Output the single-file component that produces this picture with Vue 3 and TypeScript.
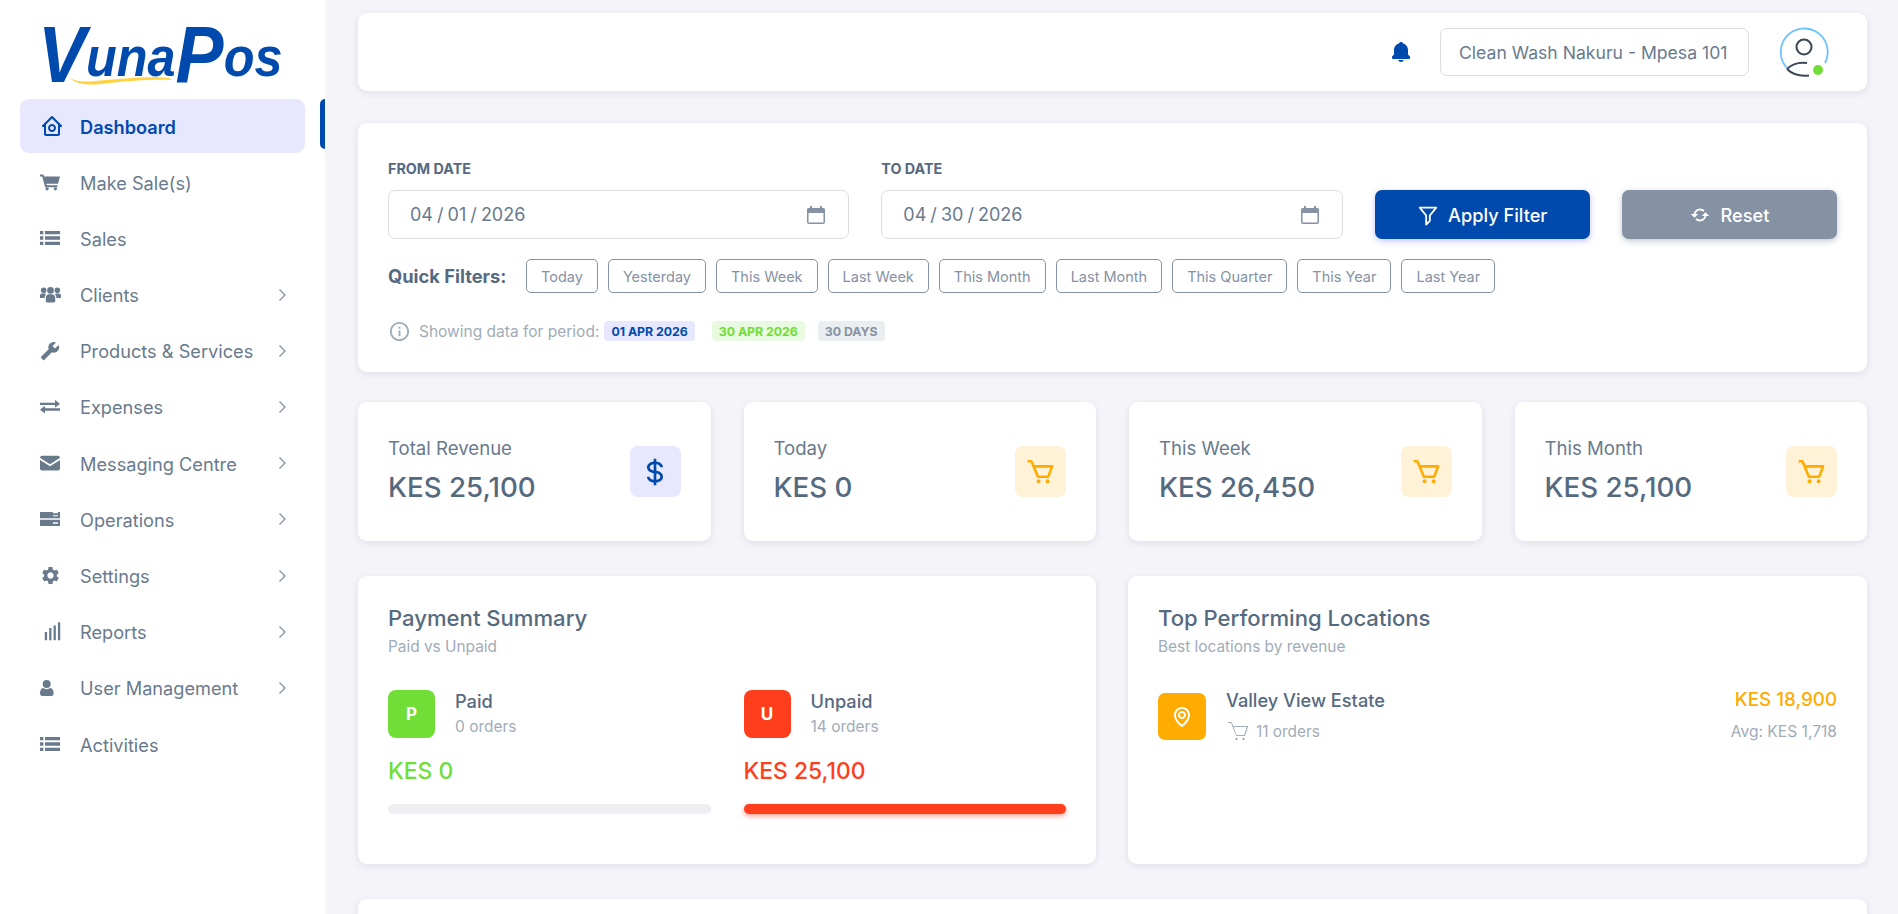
<script setup lang="ts">
import { ref } from 'vue'

interface NavItem {
  label: string
  size: number
  paths: string[]
  hasChildren?: boolean
  active?: boolean
}

const listIcon = ['M0 3.500h4v4H0zM6 3.500h18v4H6zM0 10h4v4H0zM6 10h18v4H6zM0 16.500h4v4H0zM6 16.500h18v4H6z']

const navItems: NavItem[] = [
  {
    label: 'Dashboard',
    size: 24,
    active: true,
    paths: [
      'M3 13h1v7c0 1.103.897 2 2 2h12c1.103 0 2-.897 2-2v-7h1a1 1 0 0 0 .707-1.707l-9-9a.999.999 0 0 0-1.414 0l-9 9A1 1 0 0 0 3 13zm9-8.586 6 6V15l.001 5H6v-9.586l6-6z',
      'M12 18c2.206 0 4-1.794 4-4s-1.794-4-4-4-4 1.794-4 4 1.794 4 4 4zm0-6c1.103 0 2 .897 2 2s-.897 2-2 2-2-.897-2-2 .897-2 2-2z',
    ],
  },
  {
    label: 'Make Sale(s)',
    size: 20,
    paths: ['M0 3h4.2l.7 2.4H24l-2.4 8.6H7.6l.5 2H21v2.4H6.2L2.6 5.4H0z', 'M6.5 20.2a2 2 0 1 0 4 0 2 2 0 0 0-4 0zM16.5 20.2a2 2 0 1 0 4 0 2 2 0 0 0-4 0z'],
  },
  { label: 'Sales', size: 20, paths: listIcon },
  {
    label: 'Clients',
    size: 21,
    hasChildren: true,
    paths: [
      'M12 3.500a3.800 3.800 0 1 1 0 7.600 3.800 3.800 0 0 1 0-7.600zM4.200 4a3.200 3.200 0 1 1 0 6.400 3.200 3.200 0 0 1 0-6.400zM19.800 4a3.200 3.200 0 1 1 0 6.400 3.200 3.200 0 0 1 0-6.400z',
      'M6.600 19.800v-4c0-2.800 2.200-4.200 3.600-4.200h3.600c1.400 0 3.600 1.400 3.600 4.200v4c0 .8-.8 1.200-1.600 1.200H8.200c-.8 0-1.600-.4-1.600-1.200z',
      'M0 15.400v-2.200c0-1.400 1-2.400 2.400-2.400h3.400c.3.6.7 1 1.200 1.300-1.100 1-1.800 2.400-1.800 4H1.400C.6 16.100 0 16 0 15.400zM24 15.400v-2.200c0-1.400-1-2.400-2.400-2.400h-3.400c-.3.6-.7 1-1.200 1.300 1.100 1 1.800 2.400 1.800 4h3.800c.8 0 1.400-.1 1.400-.7z',
    ],
  },
  {
    label: 'Products & Services',
    size: 20,
    hasChildren: true,
    paths: ['M1.3 19l9.1-9.1c-.9-2.3-.4-5 1.5-6.9 2-2 5-2.4 7.4-1.3L15 6l3 3 4.4-4.3c1.2 2.4.7 5.4-1.3 7.4-1.9 1.9-4.6 2.4-6.9 1.5l-9.1 9.1c-.4.4-1 .4-1.4 0l-2.3-2.3c-.5-.4-.5-1.1-.1-1.4z'],
  },
  {
    label: 'Expenses',
    size: 20,
    hasChildren: true,
    paths: ['M0 7h18V3.400L24 8.300l-6 4.300V9.600H0zM24 13.400H6v-3l-6 4.800 6 4.500v-3.200h18z'],
  },
  {
    label: 'Messaging Centre',
    size: 20,
    hasChildren: true,
    paths: ['M0 5.600C0 4.400.9 3.200 2.400 3.200h19.200C23.100 3.200 24 4.400 24 5.600L12 13.400zM0 8.400l12 7.600 12-7.600v10.200c0 1.400-1 2.400-2.400 2.400H2.400C1 21 0 20 0 18.600z'],
  },
  {
    label: 'Operations',
    size: 20,
    hasChildren: true,
    paths: ['M0 3.500h15.500v1.600h6V3.500H24v7.500H0zM15.500 7.600v1h6v-1zM0 13h24v3h-8.500v1.600h6V16H24v4.500H0z'],
  },
  {
    label: 'Settings',
    size: 21,
    hasChildren: true,
    paths: ['M19.14 12.94c.04-.3.06-.61.06-.94 0-.32-.02-.64-.07-.94l2.03-1.58a.49.49 0 0 0 .12-.61l-1.92-3.32a.488.488 0 0 0-.59-.22l-2.39.96c-.5-.38-1.03-.7-1.62-.94l-.36-2.54a.484.484 0 0 0-.48-.41h-3.84c-.24 0-.43.17-.47.41l-.36 2.54c-.59.24-1.13.57-1.62.94l-2.39-.96c-.22-.08-.47 0-.59.22L2.74 8.87c-.12.21-.08.47.12.61l2.03 1.58c-.05.3-.09.63-.09.94s.02.64.07.94l-2.03 1.58a.49.49 0 0 0-.12.61l1.92 3.32c.12.22.37.29.59.22l2.39-.96c.5.38 1.03.7 1.62.94l.36 2.54c.05.24.24.41.48.41h3.84c.24 0 .44-.17.47-.41l.36-2.54c.59-.24 1.13-.56 1.62-.94l2.39.96c.22.08.47 0 .59-.22l1.92-3.32c.12-.22.07-.47-.12-.61l-2.01-1.58zM12 15.600c-1.980 0-3.600-1.620-3.600-3.600s1.620-3.600 3.600-3.600 3.600 1.620 3.600 3.600-1.620 3.600-3.600 3.600z'],
  },
  {
    label: 'Reports',
    size: 21,
    hasChildren: true,
    paths: ['M5.500 12.500h2.600V22H5.500zM10.500 8h2.600v14h-2.600zM15.500 5h2.600v17h-2.600zM20.500 1.500h2.600V22h-2.600z'],
  },
  {
    label: 'User Management',
    size: 20,
    hasChildren: true,
    paths: ['M8 2.400a4.800 4.800 0 1 1 0 9.600 4.800 4.800 0 0 1 0-9.600zM0 18.400c0-4 2-6.400 4-6.400 1 .8 2.400 1.400 4 1.400s3-.6 4-1.400c2.200 0 4.400 2.400 4.400 6.400 0 2-1 3.200-2.800 3.200H2.800C1 21.600 0 20.400 0 18.400z'],
  },
  { label: 'Activities', size: 20, paths: listIcon },
]

const fromDate = ref('04 / 01 / 2026')
const toDate = ref('04 / 30 / 2026')
const quickFilters = ['Today', 'Yesterday', 'This Week', 'Last Week', 'This Month', 'Last Month', 'This Quarter', 'This Year', 'Last Year']

const cartPath = 'M21.822 7.431A1 1 0 0 0 21 7H7.333L6.179 4.23A1.994 1.994 0 0 0 4.333 3H2v2h2.333l4.744 11.385A1 1 0 0 0 10 17h8c.417 0 .79-.259.937-.648l3-8a1 1 0 0 0-.115-.921zM17.307 15h-6.640l-2.500-6h11.390l-2.250 6z'

const stats = [
  { label: 'Total Revenue', value: 'KES 25,100', kind: 'dollar' },
  { label: 'Today', value: 'KES 0', kind: 'cart' },
  { label: 'This Week', value: 'KES 26,450', kind: 'cart' },
  { label: 'This Month', value: 'KES 25,100', kind: 'cart' },
]

const payments = [
  { key: 'paid', letter: 'P', name: 'Paid', orders: '0 orders', amount: 'KES 0', percent: 0 },
  { key: 'unpaid', letter: 'U', name: 'Unpaid', orders: '14 orders', amount: 'KES 25,100', percent: 100 },
]
</script>

<template>
  <div class="layout">
    <aside class="sidebar">
      <div class="brand">
        <svg class="brand-logo" viewBox="0 0 245 68" role="img" aria-label="VunaPos">
          <text class="brand-text" x="0" y="57" transform="scale(0.9 1)"><tspan class="brand-cap" dy="6">V</tspan><tspan dy="-6">una</tspan><tspan class="brand-cap" dy="6">P</tspan><tspan dy="-6">os</tspan></text>
          <path d="M31 58c8 6 18 5 38 3s44-4 62-2l3 2c-20-1-44 1-63 3-20 3-33 2-40-6z" fill="#ffd23f" />
        </svg>
      </div>
      <span class="active-marker"></span>
      <nav class="menu">
        <a v-for="item in navItems" :key="item.label" class="menu-item" :class="{ active: item.active }">
          <span class="menu-icon">
            <svg :width="item.size" :height="item.size" viewBox="0 0 24 24" fill="currentColor">
              <path v-for="d in item.paths" :key="d" :d="d" fill-rule="evenodd" />
            </svg>
          </span>
          <span class="menu-label">{{ item.label }}</span>
          <svg v-if="item.hasChildren" class="chevron" width="9" height="14" viewBox="0 0 9 14" fill="none">
            <path d="M1.500 1.500 7 7l-5.500 5.500" stroke="currentColor" stroke-width="1.300" />
          </svg>
        </a>
      </nav>
    </aside>

    <main class="content">
      <header class="card topbar">
        <svg class="bell" width="24" height="24" viewBox="0 0 24 24" fill="currentColor">
          <path d="M12 22c1.311 0 2.407-.834 2.818-2H9.182C9.593 21.166 10.689 22 12 22zm7-7.414V10c0-3.217-2.185-5.927-5.145-6.742C13.562 2.520 12.846 2 12 2s-1.562.520-1.855 1.258C7.185 4.074 5 6.783 5 10v4.586l-1.707 1.707A.996.996 0 0 0 3 17v1a1 1 0 0 0 1 1h16a1 1 0 0 0 1-1v-1a.996.996 0 0 0-.293-.707L19 14.586z" />
        </svg>
        <div class="location-select">Clean Wash Nakuru - Mpesa 101</div>
        <div class="avatar">
          <svg width="50" height="50" viewBox="0 0 50 50" fill="none">
            <path d="M8 41A23.500 23.500 0 1 1 46 36" stroke="#6ec1ff" stroke-width="1.800" />
            <circle cx="25" cy="20" r="7.500" stroke="#3d4753" stroke-width="2" />
            <path d="M8 42C13 37 20 35 28 36M8 42C13 47 21 49.500 30 48.500" stroke="#3d4753" stroke-width="2" />
          </svg>
          <span class="online-dot"></span>
        </div>
      </header>

      <section class="card filter-card">
        <div class="filter-grid">
          <div class="field">
            <label>FROM DATE</label>
            <div class="date-input">
              <span>{{ fromDate }}</span>
              <svg width="20" height="20" viewBox="0 0 20 20"><path d="M4 1h2v2h8V1h2v2h1.500A1.500 1.500 0 0 1 19 4.500V17a2 2 0 0 1-2 2H3a2 2 0 0 1-2-2V4.500A1.500 1.500 0 0 1 2.500 3H4zM2.500 8v9a.5.5 0 0 0 .5.5h14a.5.5 0 0 0 .5-.5V8z" fill="#8592a3" fill-rule="evenodd" /></svg>
            </div>
          </div>
          <div class="field">
            <label>TO DATE</label>
            <div class="date-input">
              <span>{{ toDate }}</span>
              <svg width="20" height="20" viewBox="0 0 20 20"><path d="M4 1h2v2h8V1h2v2h1.500A1.500 1.500 0 0 1 19 4.500V17a2 2 0 0 1-2 2H3a2 2 0 0 1-2-2V4.500A1.500 1.500 0 0 1 2.500 3H4zM2.500 8v9a.5.5 0 0 0 .5.5h14a.5.5 0 0 0 .5-.5V8z" fill="#8592a3" fill-rule="evenodd" /></svg>
            </div>
          </div>
          <button class="btn btn-primary">
            <svg width="22" height="22" viewBox="0 0 24 24" fill="none"><path d="M3 4h18l-7 8.500v6L10 22.500V12.500z" stroke="currentColor" stroke-width="2" stroke-linejoin="round" /></svg>
            Apply Filter
          </button>
          <button class="btn btn-secondary">
            <svg width="22" height="22" viewBox="0 0 24 24" fill="currentColor"><path d="M10 11H7.101l.001-.009a4.956 4.956 0 0 1 .752-1.787 5.054 5.054 0 0 1 2.200-1.811c.302-.128.617-.226.938-.291a5.078 5.078 0 0 1 2.018 0 4.978 4.978 0 0 1 2.525 1.361l1.416-1.412a7.036 7.036 0 0 0-2.224-1.501 6.921 6.921 0 0 0-1.315-.408 7.079 7.079 0 0 0-2.819 0 6.940 6.940 0 0 0-1.316.409 7.040 7.040 0 0 0-3.080 2.534 6.978 6.978 0 0 0-1.054 2.505c-.028.135-.043.273-.063.410H2l4 4 4-4zm4 2h2.899l-.001.008a4.976 4.976 0 0 1-2.103 3.138 4.943 4.943 0 0 1-1.787.752 5.073 5.073 0 0 1-2.017 0 4.956 4.956 0 0 1-1.787-.752 5.072 5.072 0 0 1-.740-.610L7.050 16.950a7.032 7.032 0 0 0 2.225 1.500c.424.180.867.317 1.315.408a7.070 7.070 0 0 0 2.818 0 7.031 7.031 0 0 0 4.395-2.945 6.974 6.974 0 0 0 1.053-2.503c.027-.135.043-.273.063-.410H22l-4-4-4 4z" /></svg>
            Reset
          </button>
        </div>

        <div class="quick-row">
          <span class="quick-label">Quick Filters:</span>
          <button v-for="f in quickFilters" :key="f" class="chip">{{ f }}</button>
        </div>

        <div class="period-row">
          <svg width="23" height="23" viewBox="0 0 24 24" fill="currentColor"><path d="M12 2C6.486 2 2 6.486 2 12s4.486 10 10 10 10-4.486 10-10S17.514 2 12 2zm0 18c-4.411 0-8-3.589-8-8s3.589-8 8-8 8 3.589 8 8-3.589 8-8 8z" /><path d="M11 11h2v6h-2zm0-4h2v2h-2z" /></svg>
          <span class="period-text">Showing data for period:</span>
          <span class="badge badge-blue">01 APR 2026</span>
          <span class="badge badge-green">30 APR 2026</span>
          <span class="badge badge-gray">30 DAYS</span>
        </div>
      </section>

      <section class="stats-grid">
        <div v-for="s in stats" :key="s.label" class="card stat-card">
          <div>
            <div class="stat-label">{{ s.label }}</div>
            <div class="stat-value">{{ s.value }}</div>
          </div>
          <div class="stat-icon" :class="s.kind">
            <svg v-if="s.kind === 'dollar'" width="32" height="32" viewBox="0 0 24 24" fill="currentColor"><path d="M15.999 8.500h2c0-2.837-2.755-4.131-5-4.429V2h-2v2.071c-2.245.298-5 1.592-5 4.429 0 2.706 2.666 4.113 5 4.430v4.970c-1.448-.251-3-1.024-3-2.400h-2c0 2.589 2.425 4.119 5 4.436V22h2v-2.070c2.245-.298 5-1.593 5-4.430s-2.755-4.131-5-4.429V6.100c1.330.239 3 .941 3 2.400zm-8 0c0-1.459 1.670-2.161 3-2.400v4.799c-1.371-.253-3-1.002-3-2.399zm8 7c0 1.459-1.670 2.161-3 2.400v-4.800c1.330.239 3 .941 3 2.400z" /></svg>
            <svg v-else width="31" height="31" viewBox="0 0 24 24" fill="currentColor"><path :d="cartPath" /><circle cx="10.500" cy="19.500" r="1.500" /><circle cx="17.500" cy="19.500" r="1.500" /></svg>
          </div>
        </div>
      </section>

      <section class="summary-grid">
        <div class="card summary-card">
          <h3 class="card-title">Payment Summary</h3>
          <p class="card-sub">Paid vs Unpaid</p>
          <div class="payment-cols">
            <div v-for="p in payments" :key="p.key" class="payment" :class="p.key">
              <div class="payment-head">
                <span class="payment-letter">{{ p.letter }}</span>
                <div>
                  <div class="row-name">{{ p.name }}</div>
                  <div class="payment-orders">{{ p.orders }}</div>
                </div>
              </div>
              <div class="payment-amount">{{ p.amount }}</div>
              <div class="progress"><div class="progress-bar" :style="{ width: p.percent + '%' }"></div></div>
            </div>
          </div>
        </div>

        <div class="card summary-card">
          <h3 class="card-title">Top Performing Locations</h3>
          <p class="card-sub">Best locations by revenue</p>
          <div class="location-row">
            <span class="location-icon">
              <svg width="24" height="24" viewBox="0 0 24 24" fill="currentColor"><path d="M12 14c2.206 0 4-1.794 4-4s-1.794-4-4-4-4 1.794-4 4 1.794 4 4 4zm0-6c1.103 0 2 .897 2 2s-.897 2-2 2-2-.897-2-2 .897-2 2-2z" /><path d="M11.420 21.814a.998.998 0 0 0 1.160 0C12.884 21.599 20.029 16.440 20 10c0-4.411-3.589-8-8-8S4 5.589 4 9.995c-.029 6.445 7.116 11.604 7.420 11.819zM12 4c3.309 0 6 2.691 6 6.005.021 4.438-4.388 8.423-6 9.730-1.611-1.308-6.021-5.294-6-9.735 0-3.309 2.691-6 6-6z" /></svg>
            </span>
            <div class="location-info">
              <div class="row-name">Valley View Estate</div>
              <div class="location-orders">
                <svg width="24" height="24" viewBox="0 0 24 24" fill="currentColor"><path d="M21 7H7.333L6.179 4.230A1.994 1.994 0 0 0 4.333 3H2v1h2.333c.4 0 .8.300 1 .7l4.500 11.600c.1.400.4.700.7.700h8c.3 0 .5-.2.6-.5l3-8.800c.1-.4-.2-.7-.5-.7zM18.100 16h-7.700L7.700 8h13.100z" /><circle cx="10.500" cy="20" r="1.200" /><circle cx="17.500" cy="20" r="1.200" /></svg>
                <span>11 orders</span>
              </div>
            </div>
            <div class="location-total">
              <div class="location-amount">KES 18,900</div>
              <div class="location-avg">Avg: KES 1,718</div>
            </div>
          </div>
        </div>
      </section>

      <section class="card bottom-card"></section>
    </main>
  </div>
</template>

<style scoped>
.layout {
  display: flex;
  height: 914px;
  overflow: hidden;
  background: #f4f4f9;
  font-family: Inter, "Liberation Sans", sans-serif;
  color: #697a8d;
}

.sidebar {
  position: relative;
  flex: 0 0 325px;
  background: #fff;
}

.brand {
  height: 99px;
  padding: 19px 0 0 38px;
  box-sizing: border-box;
}

.brand-logo {
  display: block;
  width: 245px;
  height: 68px;
  overflow: visible;
}

.brand-text {
  font-family: "Liberation Sans", sans-serif;
  font-style: italic;
  font-weight: 700;
  font-size: 56px;
  fill: #004aad;
}

.brand-cap {
  font-size: 80px;
}

.active-marker {
  position: absolute;
  top: 99px;
  right: 0;
  width: 5px;
  height: 50px;
  background: #004aad;
  border-radius: 5px 0 0 5px;
}

.menu {
  padding: 0 20px;
}

.menu-item {
  display: flex;
  align-items: center;
  height: 54px;
  margin-bottom: 2.2px;
  padding: 0 18px 0 20px;
  border-radius: 9px;
  font-size: 18.2px;
  color: #697a8d;
}

.menu-item.active {
  background: #e7e7ff;
  color: #004aad;
  font-weight: 600;
}

.menu-icon {
  flex: 0 0 40px;
  display: flex;
  align-items: center;
}

.menu-label {
  flex: 1;
  padding-top: 1px;
}

.chevron {
  color: #8592a3;
}

.content {
  flex: 1;
  min-width: 0;
  padding: 13px 31px 0 33px;
}

.card {
  background: #fff;
  border-radius: 9px;
  box-shadow: 0 2px 7px rgba(67, 89, 113, 0.12);
}

.topbar {
  display: flex;
  align-items: center;
  justify-content: flex-end;
  height: 78px;
  padding: 0 38px 0 0;
}

.bell {
  color: #004aad;
  margin-right: 27px;
}

.location-select {
  width: 309px;
  height: 48px;
  box-sizing: border-box;
  padding: 0 18px;
  display: flex;
  align-items: center;
  border: 1px solid #d9dee3;
  border-radius: 7px;
  font-size: 17.6px;
  white-space: nowrap;
}

.avatar {
  position: relative;
  width: 50px;
  height: 50px;
  margin-left: 30px;
}

.online-dot {
  position: absolute;
  right: 6px;
  bottom: 2px;
  width: 10px;
  height: 10px;
  border-radius: 50%;
  background: #71dd37;
}

.filter-card {
  margin-top: 32px;
  height: 249px;
  padding: 36px 30px 0;
  box-sizing: border-box;
}

.filter-grid {
  display: grid;
  grid-template-columns: 461fr 461fr 215fr 215fr;
  column-gap: 32px;
  align-items: end;
}

.field label {
  display: block;
  margin-bottom: 12px;
  font-size: 14.3px;
  line-height: 19px;
  font-weight: 700;
  color: #566a7f;
}

.date-input {
  display: flex;
  align-items: center;
  justify-content: space-between;
  height: 49px;
  box-sizing: border-box;
  padding: 0 22px 0 21px;
  border: 1px solid #d9dee3;
  border-radius: 7px;
  font-size: 18px;
  word-spacing: -1px;
}

.btn {
  display: flex;
  align-items: center;
  justify-content: center;
  gap: 9px;
  height: 49px;
  border: none;
  border-radius: 7px;
  color: #fff;
  font-family: inherit;
  font-size: 18.2px;
  font-weight: 500;
}

.btn-primary {
  background: #004aad;
  box-shadow: 0 2px 6px rgba(105, 108, 255, 0.4);
}

.btn-secondary {
  background: #8592a3;
  box-shadow: 0 2px 6px rgba(133, 146, 163, 0.5);
}

.quick-row {
  display: flex;
  align-items: center;
  margin-top: 20px;
  gap: 10px;
}

.quick-label {
  width: 128px;
  font-size: 18.3px;
  font-weight: 700;
  white-space: nowrap;
  color: #566a7f;
}

.chip {
  height: 34px;
  padding: 0 14px;
  background: #fff;
  border: 1px solid #8592a3;
  border-radius: 5px;
  color: #8592a3;
  font-family: inherit;
  font-size: 14.5px;
  white-space: nowrap;
}

.period-row {
  display: flex;
  align-items: center;
  height: 20px;
  margin-top: 28px;
  color: #a1acb8;
}

.period-text {
  margin: 0 5px 0 8px;
  font-size: 15.5px;
}

.badge {
  height: 20px;
  display: flex;
  align-items: center;
  padding: 0 7px;
  margin-right: 17px;
  border-radius: 4px;
  font-size: 12.3px;
  font-weight: 700;
}

.badge-blue {
  background: #e7e7ff;
  color: #004aad;
}

.badge-green {
  background: #e8fadf;
  color: #71dd37;
  margin-right: 13px;
}

.badge-gray {
  background: #ebeef0;
  color: #8592a3;
}

.stats-grid {
  display: grid;
  grid-template-columns: repeat(4, 1fr);
  gap: 33px;
  margin-top: 30px;
}

.stat-card {
  display: flex;
  align-items: center;
  justify-content: space-between;
  height: 139px;
  padding: 0 30px;
  box-sizing: border-box;
}

.stat-label {
  margin-top: -3px;
  font-size: 18.6px;
  line-height: 24px;
}

.stat-value {
  margin-top: 9px;
  font-size: 27.7px;
  line-height: 36px;
  font-weight: 500;
  color: #566a7f;
}

.stat-icon {
  display: flex;
  align-items: center;
  justify-content: center;
  width: 51px;
  height: 51px;
  border-radius: 8px;
}

.stat-icon.dollar {
  background: #e7e7ff;
  color: #004aad;
}

.stat-icon.cart {
  background: #fff2d6;
  color: #ffab00;
}

.summary-grid {
  display: grid;
  grid-template-columns: 738px 1fr;
  gap: 32px;
  margin-top: 35px;
}

.summary-card {
  height: 288px;
  padding: 27px 30px 0;
  box-sizing: border-box;
}

.card-title {
  margin: 0;
  font-size: 22.1px;
  line-height: 30px;
  font-weight: 500;
  color: #566a7f;
}

.card-sub {
  margin: 3px 0 0;
  font-size: 15.4px;
  line-height: 22px;
  color: #a1acb8;
}

.payment-cols {
  display: grid;
  grid-template-columns: 1fr 1fr;
  gap: 33px;
  margin-top: 32px;
}

.payment-head {
  display: flex;
  gap: 20px;
}

.payment-letter {
  display: flex;
  align-items: center;
  justify-content: center;
  width: 47px;
  height: 48px;
  border-radius: 8px;
  color: #fff;
  font-size: 17px;
  font-weight: 700;
}

.paid .payment-letter {
  background: #71dd37;
}

.unpaid .payment-letter {
  background: #ff3e1d;
}

.row-name {
  font-size: 18.2px;
  line-height: 22px;
  font-weight: 500;
  color: #566a7f;
}

.payment-orders {
  margin-top: 4px;
  font-size: 15.5px;
  line-height: 22px;
  color: #a1acb8;
}

.payment-amount {
  margin-top: 18px;
  font-size: 22.9px;
  line-height: 30px;
  font-weight: 500;
}

.paid .payment-amount {
  color: #71dd37;
}

.unpaid .payment-amount {
  color: #ff3e1d;
}

.progress {
  margin-top: 18px;
  height: 10px;
  border-radius: 6px;
  background: #eeeff2;
}

.progress-bar {
  height: 100%;
  border-radius: 6px;
  background: #ff3e1d;
  box-shadow: 0 2px 5px rgba(255, 62, 29, 0.5);
}

.location-row {
  display: flex;
  margin-top: 31px;
}

.location-icon {
  flex: 0 0 48px;
  display: flex;
  align-items: center;
  justify-content: center;
  height: 47px;
  margin-top: 4px;
  border-radius: 7px;
  background: #ffab00;
  color: #fff;
}

.location-info {
  flex: 1;
  margin-left: 20px;
}

.location-orders {
  display: flex;
  align-items: center;
  gap: 6px;
  margin-top: 9px;
  height: 22px;
  font-size: 15.4px;
  color: #a1acb8;
}

.location-total {
  text-align: right;
}

.location-amount {
  font-size: 18.8px;
  line-height: 22px;
  font-weight: 500;
  color: #ffab00;
}

.location-avg {
  margin-top: 10px;
  font-size: 15.6px;
  line-height: 22px;
  color: #a1acb8;
}

.bottom-card {
  height: 100px;
  margin-top: 35px;
}
</style>
